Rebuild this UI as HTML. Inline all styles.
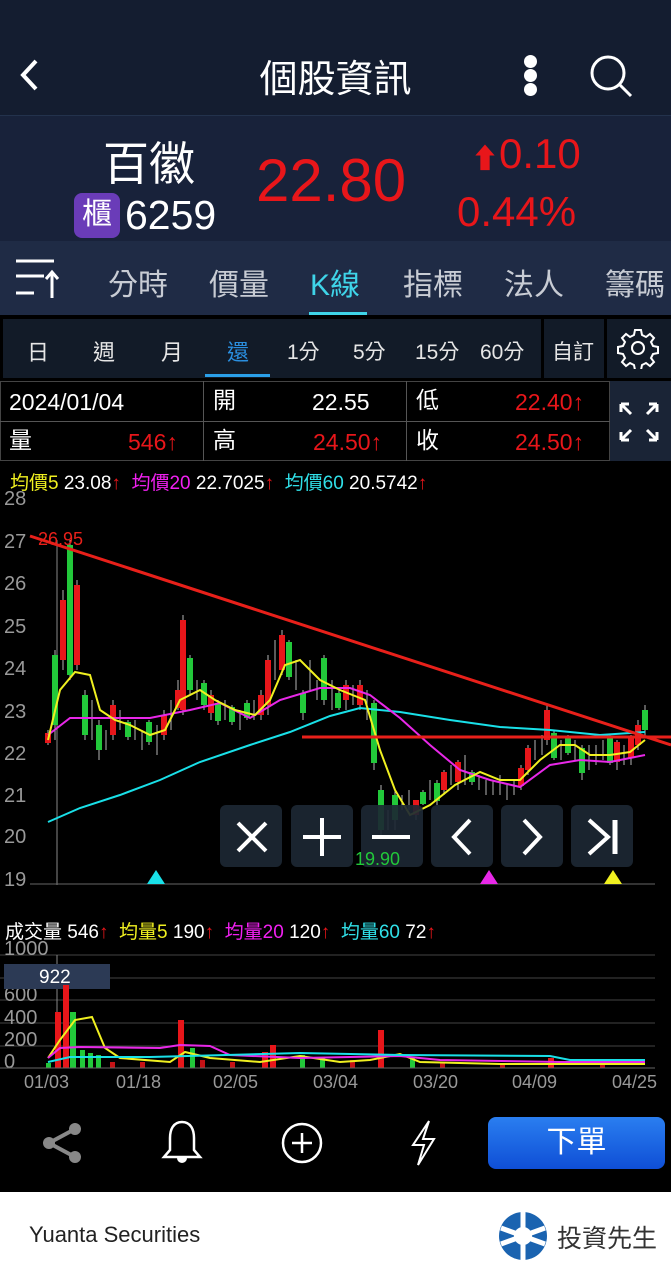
<!DOCTYPE html>
<html><head><meta charset="utf-8"><style>
*{margin:0;padding:0;box-sizing:border-box}
body{width:671px;height:1280px;background:#000;font-family:"Liberation Sans","Noto Sans CJK TC",sans-serif;color:#fff;position:relative;overflow:hidden}
.a{position:absolute}
.t{line-height:28px;font-size:23px}
</style></head><body>
<div class="a" style="left:0;top:0;width:671px;height:115px;background:#141d30"></div>
<svg class="a" style="left:14px;top:55px" width="30" height="40"><path d="M22 6 L9 20 L22 34" stroke="#fff" stroke-width="4" fill="none"/></svg>
<div class="a" style="left:0;top:48px;width:671px;text-align:center;font-size:38px">個股資訊</div>
<div class="a" style="left:524px;top:55px;width:13px;height:13px;border-radius:50%;background:#fff"></div>
<div class="a" style="left:524px;top:69px;width:13px;height:13px;border-radius:50%;background:#fff"></div>
<div class="a" style="left:524px;top:83px;width:13px;height:13px;border-radius:50%;background:#fff"></div>
<svg class="a" style="left:588px;top:52px" width="48" height="48"><circle cx="20" cy="21" r="16" stroke="#fff" stroke-width="3" fill="none"/><path d="M32 33 L43 44" stroke="#fff" stroke-width="3"/></svg>
<div class="a" style="left:0;top:115px;width:671px;height:126px;background:#18223a;border-top:1px solid #23324c"></div>
<div class="a" style="left:103px;top:128px;font-size:46px">百徽</div>
<div class="a" style="left:74px;top:193px;width:46px;height:45px;background:#6a3cb8;border-radius:8px;font-size:30px;text-align:center;line-height:44px">櫃</div>
<div class="a" style="left:125px;top:192px;font-size:41px">6259</div>
<div class="a" style="left:256px;top:146px;font-size:60px;color:#e8161a">22.80</div>
<div class="a" style="left:471px;top:130px;font-size:42px;color:#e8161a"><span style="font-size:28px">⬆</span>0.10</div>
<div class="a" style="left:457px;top:188px;font-size:42px;color:#e8161a">0.44%</div>
<div class="a" style="left:0;top:241px;width:671px;height:74px;background:#1f2b45"></div>
<svg class="a" style="left:14px;top:258px" width="46" height="42"><path d="M2 3 H40 M2 18 H30 M2 35 H20" stroke="#fff" stroke-width="3"/><path d="M38 40 V15 M32 21 L38 14 L44 21" stroke="#fff" stroke-width="3" fill="none"/></svg>
<div class="a" style="left:108px;top:260px;font-size:30px;color:#c8ccd4">分時</div>
<div class="a" style="left:209px;top:260px;font-size:30px;color:#c8ccd4">價量</div>
<div class="a" style="left:310px;top:260px;font-size:30px;color:#3fd4e8">K線</div>
<div class="a" style="left:309px;top:312px;width:58px;height:3px;background:#3fd4e8"></div>
<div class="a" style="left:403px;top:260px;font-size:30px;color:#c8ccd4">指標</div>
<div class="a" style="left:504px;top:260px;font-size:30px;color:#c8ccd4">法人</div>
<div class="a" style="left:605px;top:260px;font-size:30px;color:#c8ccd4;white-space:nowrap">籌碼</div>
<div class="a" style="left:3px;top:319px;width:538px;height:59px;background:#121b28"></div>
<div class="a" style="left:544px;top:319px;width:60px;height:59px;background:#121b28"></div>
<div class="a" style="left:607px;top:319px;width:64px;height:59px;background:#121b28"></div>
<div class="a" style="top:335px;left:27px;font-size:22px;color:#e6e6e6">日</div>
<div class="a" style="top:335px;left:93px;font-size:22px;color:#e6e6e6">週</div>
<div class="a" style="top:335px;left:161px;font-size:22px;color:#e6e6e6">月</div>
<div class="a" style="top:335px;left:227px;font-size:22px;color:#2a8fe0">還</div>
<div class="a" style="left:205px;top:374px;width:65px;height:3px;background:#2a9fe8"></div>
<div class="a" style="top:336px;left:287px;font-size:21px;color:#e6e6e6">1分</div>
<div class="a" style="top:336px;left:353px;font-size:21px;color:#e6e6e6">5分</div>
<div class="a" style="top:336px;left:415px;font-size:21px;color:#e6e6e6">15分</div>
<div class="a" style="top:336px;left:480px;font-size:21px;color:#e6e6e6">60分</div>
<div class="a" style="top:336px;left:552px;font-size:21px;color:#e6e6e6">自訂</div>
<svg class="a" style="left:617px;top:327px" width="42" height="42" viewBox="0 0 42 42"><path d="M18 3h6l1 5 4 2 4-3 4 4-3 4 2 4 5 1v6l-5 1-2 4 3 4-4 4-4-3-4 2-1 5h-6l-1-5-4-2-4 3-4-4 3-4-2-4-5-1v-6l5-1 2-4-3-4 4-4 4 3 4-2z" stroke="#fff" stroke-width="2" fill="none"/><circle cx="21" cy="21" r="6" stroke="#fff" stroke-width="2" fill="none"/></svg>
<div class="a" style="left:0;top:381px;width:610px;height:80px;border:1px solid #444;background:#000"></div>
<div class="a" style="left:203px;top:381px;width:1px;height:80px;background:#555"></div>
<div class="a" style="left:406px;top:381px;width:1px;height:80px;background:#555"></div>
<div class="a" style="left:0;top:421px;width:610px;height:1px;background:#555"></div>
<div class="a" style="left:610px;top:381px;width:61px;height:80px;background:#1a2436"></div>
<svg class="a" style="left:617px;top:400px" width="44" height="44"><path d="M4 4 L14 14 M4 4 H12 M4 4 V12 M40 4 L30 14 M40 4 H32 M40 4 V12 M4 40 L14 30 M4 40 H12 M4 40 V32 M40 40 L30 30 M40 40 H32 M40 40 V32" stroke="#fff" stroke-width="3" fill="none"/></svg>
<div class="a t" style="left:9px;top:388px">2024/01/04</div>
<div class="a t" style="left:213px;top:386px">開</div>
<div class="a t" style="left:312px;top:388px">22.55</div>
<div class="a t" style="left:416px;top:386px">低</div>
<div class="a t" style="left:515px;top:388px;color:#e8161a">22.40↑</div>
<div class="a t" style="left:9px;top:426px">量</div>
<div class="a t" style="left:128px;top:428px;color:#e8161a">546↑</div>
<div class="a t" style="left:213px;top:426px">高</div>
<div class="a t" style="left:313px;top:428px;color:#e8161a">24.50↑</div>
<div class="a t" style="left:416px;top:426px">收</div>
<div class="a t" style="left:515px;top:428px;color:#e8161a">24.50↑</div>
<div class="a" style="left:10px;top:468px;font-size:19px;white-space:nowrap"><span style="color:#f0f020">均價5</span> 23.08<span style="color:#e8161a">↑</span> &nbsp;<span style="color:#f020f0">均價20</span> 22.7025<span style="color:#e8161a">↑</span> &nbsp;<span style="color:#30e0e8">均價60</span> 20.5742<span style="color:#e8161a">↑</span></div>
<svg class="a" style="left:0;top:488px" width="671" height="400" viewBox="0 488 671 400">
<g fill="#999" font-size="20" font-family="Liberation Sans">
<text x="4" y="505">28</text><text x="4" y="548">27</text><text x="4" y="590">26</text><text x="4" y="633">25</text><text x="4" y="675">24</text><text x="4" y="718">23</text><text x="4" y="760">22</text><text x="4" y="802">21</text><text x="4" y="843">20</text><text x="4" y="886">19</text></g>
<line x1="57" y1="540" x2="57" y2="885" stroke="#888"/>
<line x1="30" y1="884" x2="655" y2="884" stroke="#666"/>
<g stroke-width="1">
<path d="M48 730v15M55 650v90M63 590v80M70 540v140M77 580v90M85 690v50M92 700v40M99 720v40M106 730v20M113 700v40M120 710v20M128 720v20M135 720v20M142 730v20M149 720v25M157 725v30M164 710v30M171 700v30M178 680v30M183 615v100M190 655v40M197 680v20M204 680v30M211 690v30M218 700v25M225 700v20M232 705v20M240 710v20M247 700v20M254 700v20M261 690v30M268 655v60M275 640v40M282 630v45M289 640v40M296 660v30M303 690v30M310 660v30M317 680v20M324 655v50M332 680v30M339 690v20M346 680v30M353 685v20M360 680v30M367 690v30M374 700v70M381 785v50M388 810v20M395 790v40M402 795v15M409 790v20M416 800v20M423 790v15M430 780v20M437 780v25M444 770v25M451 765v20M458 760v30M465 755v30M472 770v15M479 775v15M486 780v15M493 780v15M500 775v20M507 785v15M514 780v15M521 765v25M528 745v30M535 740v20M542 735v20M547 705v40M554 730v30M561 740v20M568 735v20M575 740v20M582 745v35M589 745v25M596 745v20M603 740v20M610 735v30M617 740v30M624 745v20M631 735v30M638 720v30M645 705v30" stroke="#fff" stroke-opacity=".7"/>
</g>
<g fill="#e8161a">
<rect x="45" y="733" width="6" height="10"/><rect x="60" y="600" width="6" height="60"/><rect x="74" y="585" width="6" height="80"/><rect x="110" y="705" width="6" height="30"/><rect x="161" y="715" width="6" height="20"/><rect x="175" y="690" width="6" height="18"/><rect x="180" y="620" width="6" height="90"/><rect x="208" y="695" width="6" height="18"/><rect x="258" y="695" width="6" height="20"/><rect x="265" y="660" width="6" height="45"/><rect x="279" y="635" width="6" height="35"/><rect x="343" y="685" width="6" height="15"/><rect x="357" y="685" width="6" height="20"/><rect x="413" y="800" width="6" height="15"/><rect x="441" y="772" width="6" height="18"/><rect x="455" y="762" width="6" height="20"/><rect x="518" y="768" width="6" height="18"/><rect x="525" y="748" width="6" height="22"/><rect x="544" y="710" width="6" height="30"/><rect x="614" y="742" width="6" height="20"/><rect x="628" y="738" width="6" height="20"/><rect x="635" y="725" width="6" height="20"/></g>
<g fill="#22c83a">
<rect x="52" y="655" width="6" height="70"/><rect x="67" y="545" width="6" height="130"/><rect x="82" y="695" width="6" height="40"/><rect x="96" y="725" width="6" height="25"/><rect x="125" y="722" width="6" height="15"/><rect x="146" y="722" width="6" height="20"/><rect x="187" y="658" width="6" height="32"/><rect x="201" y="683" width="6" height="22"/><rect x="215" y="703" width="6" height="18"/><rect x="229" y="707" width="6" height="15"/><rect x="244" y="703" width="6" height="15"/><rect x="286" y="642" width="6" height="35"/><rect x="300" y="693" width="6" height="20"/><rect x="321" y="658" width="6" height="42"/><rect x="335" y="693" width="6" height="15"/><rect x="371" y="703" width="6" height="60"/><rect x="378" y="790" width="6" height="40"/><rect x="392" y="795" width="6" height="25"/><rect x="420" y="792" width="6" height="12"/><rect x="434" y="783" width="6" height="18"/><rect x="469" y="772" width="6" height="10"/><rect x="551" y="733" width="6" height="25"/><rect x="565" y="738" width="6" height="15"/><rect x="579" y="748" width="6" height="25"/><rect x="607" y="738" width="6" height="25"/><rect x="642" y="710" width="6" height="20"/></g>
<polyline fill="none" stroke="#19e0e8" stroke-width="2" points="48,822 80,808 120,795 160,780 200,762 250,745 290,732 330,716 360,708 400,712 450,720 500,727 550,730 600,735 645,732"/>
<polyline fill="none" stroke="#e828e8" stroke-width="2" points="48,735 70,718 100,718 150,718 190,710 220,703 250,718 280,700 320,688 350,688 370,695 400,718 430,745 460,770 490,780 520,787 550,765 580,760 610,762 645,755"/>
<polyline fill="none" stroke="#f0f020" stroke-width="2" points="48,740 60,690 75,672 90,675 100,710 115,720 130,725 150,735 165,730 180,700 200,690 215,700 235,710 255,715 270,700 285,665 300,660 320,680 340,690 365,700 380,750 395,790 410,815 430,805 455,785 480,772 500,780 520,780 540,760 560,745 575,745 590,755 610,755 630,752 645,740"/>
<line x1="30" y1="536" x2="671" y2="745" stroke="#e8201a" stroke-width="3"/>
<line x1="302" y1="737" x2="671" y2="737" stroke="#e8201a" stroke-width="3"/>
<text x="38" y="545" fill="#e8201a" font-size="18" font-family="Liberation Sans">26.95</text>
<g fill="#1c2733" fill-opacity=".92"><rect x="220" y="805" width="62" height="62" rx="6"/><rect x="291" y="805" width="62" height="62" rx="6"/><rect x="361" y="805" width="62" height="62" rx="6"/><rect x="431" y="805" width="62" height="62" rx="6"/><rect x="501" y="805" width="62" height="62" rx="6"/><rect x="571" y="805" width="62" height="62" rx="6"/></g>
<g stroke="#fff" stroke-width="4" fill="none"><path d="M238 823l28 28M266 823l-28 28M322 818v38M303 837h38M372 837h38M470 820l-16 17 16 17M524 820l16 17-16 17M589 820l19 17-19 17"/><path d="M615 820v34" stroke-width="5"/></g>
<text x="355" y="865" fill="#22c83a" font-size="18" font-family="Liberation Sans">19.90</text>
<path d="M147 884l9-14 9 14z" fill="#19e0e8"/><path d="M480 884l9-14 9 14z" fill="#e828e8"/><path d="M604 884l9-14 9 14z" fill="#f0f020"/>
</svg>
<div class="a" style="left:5px;top:917px;font-size:19px;white-space:nowrap">成交量 546<span style="color:#e8161a">↑</span> &nbsp;<span style="color:#f0f020">均量5</span> 190<span style="color:#e8161a">↑</span> &nbsp;<span style="color:#f020f0">均量20</span> 120<span style="color:#e8161a">↑</span> &nbsp;<span style="color:#30e0e8">均量60</span> 72<span style="color:#e8161a">↑</span></div>
<svg class="a" style="left:0;top:935px" width="671" height="160" viewBox="0 935 671 160">
<g stroke="#444"><line x1="0" y1="955" x2="655" y2="955"/><line x1="0" y1="978" x2="655" y2="978"/><line x1="0" y1="1000" x2="655" y2="1000"/><line x1="0" y1="1023" x2="655" y2="1023"/><line x1="0" y1="1046" x2="655" y2="1046"/></g>
<g fill="#999" font-size="20" font-family="Liberation Sans"><text x="4" y="955">1000</text><text x="4" y="1001">600</text><text x="4" y="1024">400</text><text x="4" y="1046">200</text><text x="4" y="1068">0</text></g>
<line x1="57" y1="955" x2="57" y2="1068" stroke="#888"/>
<rect x="4" y="964" width="106" height="25" fill="#2c3a55"/><text x="39" y="983" fill="#fff" font-size="19" font-family="Liberation Sans">922</text>
<g fill="#e8161a"><rect x="55" y="1012" width="6" height="56"/><rect x="63" y="985" width="6" height="83"/><rect x="178" y="1020" width="6" height="48"/><rect x="262" y="1052" width="6" height="16"/><rect x="378" y="1030" width="6" height="38"/><rect x="270" y="1045" width="6" height="23"/><rect x="548" y="1058" width="6" height="10"/></g>
<g fill="#22c83a"><rect x="46" y="1063" width="5" height="5"/><rect x="70" y="1012" width="6" height="56"/><rect x="80" y="1050" width="5" height="18"/><rect x="88" y="1053" width="5" height="15"/><rect x="96" y="1055" width="5" height="13"/><rect x="190" y="1048" width="5" height="20"/><rect x="300" y="1055" width="5" height="13"/><rect x="320" y="1058" width="5" height="10"/><rect x="410" y="1058" width="5" height="10"/></g>
<g fill="#e8161a" opacity=".85"><rect x="110" y="1062" width="5" height="6"/><rect x="140" y="1062" width="5" height="6"/><rect x="200" y="1060" width="5" height="8"/><rect x="230" y="1062" width="5" height="6"/><rect x="350" y="1060" width="5" height="8"/><rect x="440" y="1062" width="5" height="6"/><rect x="500" y="1063" width="5" height="5"/><rect x="600" y="1063" width="5" height="5"/></g>
<polyline fill="none" stroke="#f0f020" stroke-width="2" points="48,1058 60,1040 75,1020 92,1017 105,1048 120,1058 170,1062 185,1052 210,1058 260,1062 300,1056 340,1062 370,1060 400,1054 420,1062 500,1064 560,1064 645,1064"/>
<polyline fill="none" stroke="#e828e8" stroke-width="2" points="48,1058 60,1048 80,1047 160,1048 180,1045 210,1046 230,1055 300,1058 400,1056 440,1060 560,1062 645,1062"/>
<polyline fill="none" stroke="#19e0e8" stroke-width="2" points="48,1062 70,1057 150,1057 300,1053 400,1055 550,1056 570,1060 645,1060"/>
<line x1="0" y1="1068" x2="655" y2="1068" stroke="#666"/>
<g fill="#999" font-size="18" font-family="Liberation Sans"><text x="24" y="1088">01/03</text><text x="116" y="1088">01/18</text><text x="213" y="1088">02/05</text><text x="313" y="1088">03/04</text><text x="413" y="1088">03/20</text><text x="512" y="1088">04/09</text><text x="612" y="1088">04/25</text></g>
</svg>
<svg class="a" style="left:40px;top:1120px" width="44" height="46"><g fill="#888"><circle cx="35" cy="9" r="6"/><circle cx="9" cy="23" r="6"/><circle cx="35" cy="37" r="6"/></g><path d="M35 9L9 23L35 37" stroke="#888" stroke-width="4" fill="none"/></svg>
<svg class="a" style="left:158px;top:1118px" width="48" height="50"><path d="M24 4c-9 0-12 8-12 16v12l-6 7h36l-6-7V20c0-8-3-16-12-16z" stroke="#fff" stroke-width="2.5" fill="none"/><path d="M19 40a5 5 0 0010 0z" fill="#fff"/></svg>
<svg class="a" style="left:279px;top:1120px" width="46" height="46"><circle cx="23" cy="23" r="19" stroke="#fff" stroke-width="2.5" fill="none"/><path d="M23 13v20M13 23h20" stroke="#fff" stroke-width="2.5"/></svg>
<svg class="a" style="left:405px;top:1118px" width="34" height="50"><path d="M24 3L8 27h11l-6 20L29 21H18z" stroke="#fff" stroke-width="2" fill="none"/></svg>
<div class="a" style="left:488px;top:1117px;width:177px;height:52px;border-radius:8px;background:linear-gradient(#2a7ef0,#0f4fd6);font-size:30px;text-align:center;line-height:52px">下單</div>
<div class="a" style="left:0;top:1192px;width:671px;height:88px;background:#fff"></div>
<div class="a" style="left:29px;top:1222px;font-size:22px;color:#222">Yuanta Securities</div>
<svg class="a" style="left:497px;top:1210px" width="52" height="52"><circle cx="26" cy="26" r="24" fill="#1a63b0"/><path d="M26 2V50M4 18L48 34M48 18L4 34" stroke="#fff" stroke-width="5"/><circle cx="26" cy="26" r="9" fill="#fff"/></svg>
<div class="a" style="left:557px;top:1219px;font-size:25px;color:#333">投資先生</div>
</body></html>
